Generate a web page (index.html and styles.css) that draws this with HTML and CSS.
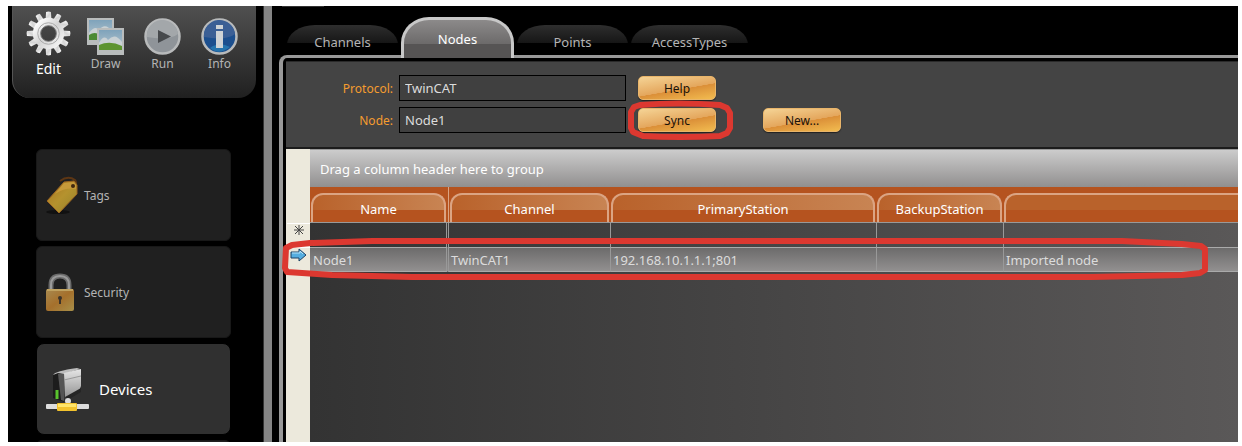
FILE: index.html
```html
<!DOCTYPE html>
<html lang="en">
<head>
    <meta charset="utf-8">
    <meta name="viewport" content="width=device-width, initial-scale=1">
    <link rel="stylesheet" href="styles.css">
    <title>Devices</title>
</head>
<body>

<div class="app">
  <aside class="sidebar">
    <nav class="toolbar">
      <button class="tool tool-active" type="button">
        <svg width="45" height="45" viewBox="0 0 46 46">
          <defs>
            <linearGradient id="gearFill" x1="0" y1="0" x2="1" y2="1">
              <stop offset="0" stop-color="#fff"/>
              <stop offset=".5" stop-color="#d4d4d4"/>
              <stop offset="1" stop-color="#f4f4f4"/>
            </linearGradient>
            <path id="tooth" d="M20 9 L20.5 1 Q23 0 25.5 1 L26 9z"/>
          </defs>
          <g fill="url(#gearFill)">
            <use href="#tooth"/>
            <use href="#tooth" transform="rotate(30 23 23)"/>
            <use href="#tooth" transform="rotate(60 23 23)"/>
            <use href="#tooth" transform="rotate(90 23 23)"/>
            <use href="#tooth" transform="rotate(120 23 23)"/>
            <use href="#tooth" transform="rotate(150 23 23)"/>
            <use href="#tooth" transform="rotate(180 23 23)"/>
            <use href="#tooth" transform="rotate(210 23 23)"/>
            <use href="#tooth" transform="rotate(240 23 23)"/>
            <use href="#tooth" transform="rotate(270 23 23)"/>
            <use href="#tooth" transform="rotate(300 23 23)"/>
            <use href="#tooth" transform="rotate(330 23 23)"/>
          </g>
          <circle cx="23" cy="23" r="12" fill="none" stroke="url(#gearFill)" stroke-width="8"/>
          <circle cx="23" cy="23" r="11" fill="none" stroke="#aaa" stroke-width="1"/>
          <circle cx="23" cy="23" r="8" fill="none" stroke="#777" stroke-width="1"/>
        </svg>
        <span>Edit</span>
      </button>
      <button class="tool" type="button">
        <svg width="37" height="37" viewBox="0 0 37 37">
          <defs>
            <linearGradient id="skyFill" x1="0" y1="0" x2="0" y2="1">
              <stop offset="0" stop-color="#7fa3bb"/>
              <stop offset="1" stop-color="#b6c6ce"/>
            </linearGradient>
          </defs>
          <rect x="0" y="0" width="27" height="27" fill="#b9bcbc"/>
          <rect x="2" y="2" width="23" height="20" fill="url(#skyFill)"/>
          <path d="M2 15 Q8 7 12 12 Q18 4 25 13 V22 H2z" fill="#c9d1d4"/>
          <path d="M2 17 Q8 13 13 17 L13 22 H2z" fill="#4b8a34"/>
          <rect x="10" y="10" width="27" height="27" fill="#b9bcbc"/>
          <rect x="12" y="12" width="23" height="20" fill="url(#skyFill)"/>
          <path d="M12 25 Q17 16 21 22 Q28 14 35 24 V32 H12z" fill="#c9d1d4"/>
          <path d="M12 27 Q23 22 35 28 V32 H12z" fill="#5c9430"/>
        </svg>
        <span>Draw</span>
      </button>
      <button class="tool" type="button">
        <svg width="37" height="37" viewBox="0 0 37 37">
          <circle cx="18.500" cy="18.500" r="17" fill="#8f9499" stroke="#b8babb" stroke-width="2.500"/>
          <path d="M3 19 A15.500 15.500 0 0 1 34 16 Q25 23 3 19z" fill="#a3a7aa"/>
          <path d="M14 12 L27 18.500 L14 25z" fill="#46494c"/>
        </svg>
        <span>Run</span>
      </button>
      <button class="tool" type="button">
        <svg width="37" height="37" viewBox="0 0 37 37">
          <circle cx="18.500" cy="18.500" r="17" fill="#1c4f8e" stroke="#b8babb" stroke-width="2.500"/>
          <path d="M3 19 A15.500 15.500 0 0 1 34 16 Q25 23 3 19z" fill="#3b5f95"/>
          <path d="M9 30 Q18 23 29 29 Q18 38 9 30z" fill="#2674ad"/>
          <rect x="15" y="7" width="7" height="4" fill="#cfd3d6"/>
          <rect x="15" y="13" width="7" height="17" fill="#cfd3d6"/>
        </svg>
        <span>Info</span>
      </button>
    </nav>

    <nav class="menu">
      <a class="card" href="#tags">
        <svg width="32" height="38" viewBox="0 0 32 38">
          <defs>
            <linearGradient id="tagFill" x1="0" y1="0" x2="1" y2="1">
              <stop offset="0" stop-color="#a87420"/>
              <stop offset=".5" stop-color="#b5922e"/>
              <stop offset="1" stop-color="#94842c"/>
            </linearGradient>
          </defs>
          <ellipse cx="12" cy="36" rx="12" ry="2" fill="#111"/>
          <path d="M14 5 Q22 -1 29 4 Q32 8 27 11" fill="none" stroke="#5d3614" stroke-width="2"/>
          <path d="M1 25 L18 6 L28 5 L31 9 V18 L13 37z" fill="url(#tagFill)" stroke="#9a6320" stroke-width="1"/>
          <path d="M18 7 L28 6 L30 9 V13 Q20 11 9 18z" fill="#c79a3a"/>
          <circle cx="27" cy="10" r="2" fill="#40280f"/>
        </svg>
        <span>Tags</span>
      </a>
      <a class="card" href="#security">
        <svg width="32" height="38" viewBox="0 0 32 38">
          <defs>
            <linearGradient id="lockFill" x1="0" y1="0" x2="1" y2="1">
              <stop offset="0" stop-color="#a88a50"/>
              <stop offset=".5" stop-color="#a5702c"/>
              <stop offset="1" stop-color="#a8904a"/>
            </linearGradient>
          </defs>
          <path d="M5 19 V12 Q5 3 14 3 Q23 3 23 12 V19" fill="none" stroke="#6b6b6b" stroke-width="5"/>
          <path d="M5 19 V12 Q5 3 14 3 Q23 3 23 12 V19" fill="none" stroke="#9a9a9a" stroke-width="2"/>
          <rect x="0" y="16" width="28" height="22" rx="2" fill="url(#lockFill)"/>
          <rect x="1" y="16" width="26" height="2" fill="#c0a260"/>
          <circle cx="14" cy="25" r="2" fill="#3b332a"/>
          <rect x="13" y="25" width="2" height="6" fill="#3b332a"/>
        </svg>
        <span>Security</span>
      </a>
      <a class="card card-active" href="#devices">
        <svg width="43" height="44" viewBox="0 0 43 44">
          <defs>
            <linearGradient id="driveFill" x1="0" y1="0" x2="0" y2="1">
              <stop offset="0" stop-color="#e6e6e6"/>
              <stop offset="1" stop-color="#8f8f8f"/>
            </linearGradient>
          </defs>
          <path d="M7 7 L18 6 L18 35 L7 31z" fill="#1c1c1c"/>
          <path d="M7 8 Q9 4 31 1 L34 2 L18 7 L12 6z" fill="#bcbcbc"/>
          <path d="M12 7 L18 7 V34 L15 33z" fill="#555"/>
          <path d="M18 6 L35 2 L35 19 Q34 26 19 32z" fill="url(#driveFill)"/>
          <path d="M18 13 L35 9" stroke="#999" stroke-width="1"/>
          <path d="M19 30 L35 21 V25 L20 34z" fill="#252525"/>
          <path d="M11 23 V32" stroke="#59c32d" stroke-width="3"/>
          <circle cx="22" cy="34" r="3" fill="#ddd"/>
          <rect x="0" y="37" width="43" height="5" rx="1" fill="#ddd"/>
          <rect x="11" y="36" width="20" height="8" rx="1" fill="#f2c22d"/>
          <rect x="12" y="37" width="18" height="3" fill="#ffe56b"/>
        </svg>
        <span>Devices</span>
      </a>
      <div class="card"></div>
    </nav>
  </aside>

  <main class="main">
    <div class="tabs" role="tablist">
      <button class="tab" role="tab" type="button">Channels</button>
      <button class="tab tab-active" role="tab" type="button" aria-selected="true">Nodes</button>
      <button class="tab" role="tab" type="button">Points</button>
      <button class="tab tab-wide" role="tab" type="button">AccessTypes</button>
    </div>

    <div class="panel">
      <form class="form">
        <label for="protocol">Protocol:</label>
        <input id="protocol" type="text" value="TwinCAT">
        <button class="btn" type="button">Help</button>
        <label class="second" for="node">Node:</label>
        <input id="node" type="text" value="Node1">
        <div class="marked">
          <button class="btn" type="button">Sync</button>
          <svg class="mark" width="106" height="40" viewBox="0 0 106 40">
            <path d="M12 5 Q50 2 92 5 L99 8 L102 13 V28 L99 33 L92 36 Q50 38 15 36 L5 32 L3 28 V12 L6 7z"/>
          </svg>
        </div>
        <button class="btn btn-new" type="button">New...</button>
      </form>

      <div class="grid">
        <div class="group-bar">Drag a column header here to group</div>
        <table>
          <colgroup>
            <col class="col-mark">
            <col class="col-name">
            <col class="col-channel">
            <col class="col-primary">
            <col class="col-backup">
            <col>
          </colgroup>
          <thead>
            <tr>
              <td class="gutter"></td>
              <th class="first"><span>Name</span></th>
              <th><span>Channel</span></th>
              <th><span>PrimaryStation</span></th>
              <th><span>BackupStation</span></th>
              <th class="last"><span></span></th>
            </tr>
          </thead>
          <tbody>
            <tr class="new-row">
              <td class="gutter">
                <svg width="12" height="12" viewBox="0 0 12 12" stroke="#444" stroke-width="1">
                  <path d="M6 1V11M1 6H11M2 2L10 10M10 2L2 10"/>
                </svg>
              </td>
              <td></td><td></td><td></td><td></td><td></td>
            </tr>
            <tr class="current">
              <td class="gutter">
                <svg width="18" height="14" viewBox="0 0 18 14">
                  <path d="M1 4 H9 V1 L16 7 L9 13 V10 H1z" fill="#55aee0" stroke="#1d4266" stroke-width="1"/>
                  <path d="M2 5 H10 V3 L13 6" fill="none" stroke="#b4e2f7" stroke-width="1"/>
                </svg>
              </td>
              <td>Node1</td>
              <td>TwinCAT1</td>
              <td>192.168.10.1.1.1;801</td>
              <td></td>
              <td>Imported node</td>
            </tr>
          </tbody>
        </table>
        <svg class="row-mark" width="930" height="44" viewBox="0 0 930 44">
          <path d="M4 10 L10 7 L28 5 L90 3 H840 L900 6 L919 8 L923 11 V32 L918 35 L900 37 L810 39 H130 L50 37 L20 35 L5 34 L3 30z"/>
        </svg>
      </div>
    </div>
  </main>
</div>

</body>
</html>
```

FILE: styles.css
```css
* {
  box-sizing: border-box;
}

body {
  margin: 0;
  padding: 6px 4px 4px 8px;
  background: #fff;
  font-family: "Noto Sans", "Open Sans", sans-serif;
  font-size: 12px;
}

button, input {
  font-family: inherit;
  margin: 0;
}

.app {
  display: flex;
  height: calc(100vh - 10px);
  background: #000;
  overflow: hidden;
}

/* left side */
.sidebar {
  flex: none;
  width: 264px;
  padding-left: 4px;
  border-right: 8px solid #858585;
  box-shadow: inset -1px 0 #333;
}

.toolbar {
  display: flex;
  gap: 12px;
  width: 244px;
  height: 92px;
  padding: 5px 13px 0;
  border-left: 1px solid #555;
  border-radius: 0 0 18px 18px;
  background: linear-gradient(#505050, #202020);
}

.tool {
  display: flex;
  flex: none;
  flex-direction: column;
  align-items: center;
  width: 45px;
  padding: 7px 0 0;
  border: 0;
  background: none;
  color: #b4b4b4;
  font-size: 12px;
  line-height: 18px;
}

.tool-active {
  padding-top: 0;
  color: #fff;
  font-size: 14px;
  line-height: 26px;
}

.menu {
  display: flex;
  flex-direction: column;
  gap: 5px;
  width: 195px;
  margin: 51px 0 0 24px;
}

.card {
  display: flex;
  flex: none;
  align-items: center;
  gap: 6px;
  height: 92px;
  padding-left: 9px;
  border: 1px solid #181818;
  border-radius: 6px;
  background: #202020;
  color: #b4b4b4;
  text-decoration: none;
}

.card-active {
  gap: 10px;
  border-color: #000;
  border-radius: 8px;
  background: #303030;
  color: #fff;
  font-size: 15px;
}

/* tabs */
.main {
  display: flex;
  flex: 1;
  flex-direction: column;
  min-width: 0;
  padding-left: 7px;
  background: linear-gradient(#333, #333) 10px 0 / 42px 1px no-repeat;
}

.tabs {
  display: flex;
  align-items: flex-end;
  gap: 3px;
  height: 52px;
  padding-left: 8px;
  margin-bottom: -3px;
  z-index: 1;
}

.tab {
  width: 111px;
  height: 30px;
  margin-bottom: 3px;
  padding: 4px 0 0;
  border: 0;
  border-radius: 28px 28px 0 0 / 20px 20px 0 0;
  background: linear-gradient(#2e2e2e, #161616 18px, #000 18px);
  color: #b4b4b4;
  font-size: 13px;
}

.tab-wide {
  width: 117px;
}

.tab-active {
  width: 113px;
  height: 41px;
  margin-bottom: 0;
  padding: 0;
  border: 3px solid #c8c8c8;
  border-bottom: 0;
  border-radius: 28px 28px 0 0 / 26px 26px 0 0;
  background: linear-gradient(#8c8a8a, #6c6a6a 24px, #565454 24px);
  color: #fff;
}

.panel {
  display: flex;
  flex: 1;
  flex-direction: column;
  border-top: 3px solid #999;
  border-left: 4px solid #999;
  border-radius: 8px 0 0 0;
  padding: 3px 0 0 3px;
}

/* form */
.form {
  display: grid;
  grid-template-columns: 107px 227px 78px 78px;
  grid-template-rows: 26px 26px;
  align-items: center;
  row-gap: 6px;
  padding: 13px 0 14px;
  border-top: 1px solid #2a2a2a;
  border-bottom: 2px solid #1c1c1c;
  background: #444;
}

.form label {
  color: #f59c2f;
  text-align: right;
}

.form input {
  width: 227px;
  height: 26px;
  margin-left: 6px;
  padding: 0 5px;
  border: 1px solid #000;
  border-radius: 0;
  background: #404040;
  color: #dcdcdc;
  font-size: 13px;
}

.form .second {
  grid-column: 1;
}

.btn {
  width: 78px;
  height: 24px;
  margin-left: 18px;
  padding: 0;
  border: 1px solid #e9b56a;
  border-radius: 5px;
  background: linear-gradient(170deg, #f5d496, #e4a65c 55%, #db8f38 56%, #f2bc50);
  box-shadow: 0 1px 1px #222;
  color: #1a1208;
  font-size: 12px;
}

.btn-new {
  margin-left: 65px;
}

.marked {
  position: relative;
}

.mark, .row-mark {
  position: absolute;
  fill: none;
  stroke: #dc3830;
  stroke-width: 6px;
  stroke-linejoin: round;
  pointer-events: none;
}

.mark {
  left: 8px;
  top: -8px;
}

/* data grid */
.grid {
  position: relative;
  flex: 1;
  padding-left: 1px;
  background: linear-gradient(90deg, #ece9dc 24px, #333 24px, #5a5858);
}

.group-bar {
  height: 38px;
  margin-left: 23px;
  padding-left: 10px;
  border-top: 1px solid #999;
  background: linear-gradient(#ccc, #918f8f);
  color: #fff;
  font-size: 13px;
  line-height: 38px;
}

table {
  width: 100%;
  table-layout: fixed;
  border-collapse: separate;
  border-spacing: 0;
  font-size: 13px;
}

.col-mark { width: 23px; }
.col-name { width: 139px; }
.col-channel { width: 161px; }
.col-primary { width: 266px; }
.col-backup { width: 127px; }

th {
  height: 36px;
  padding: 6px 1px 0;
  border-bottom: 1px solid #999;
  background: #b5531f;
  color: #fff;
  font-weight: normal;
}

th span {
  display: block;
  height: 29px;
  border: 2px solid #dba483;
  border-bottom: 0;
  border-radius: 12px 12px 0 0;
  background: linear-gradient(#b5531f, #b5531f) 0 15px no-repeat, linear-gradient(90deg, #b9622b, #c88453);
  line-height: 28px;
}

th.first {
  padding-right: 2px;
  border-right: 1px solid #dba483;
}

th.last {
  padding-right: 0;
}

th.last span {
  border-right: 0;
  border-radius: 12px 0 0 0;
  background: linear-gradient(#b5531f, #b5531f) 0 15px no-repeat, #b9622b;
}

tbody td {
  height: 24px;
  padding: 0 0 0 2px;
  border-left: 1px solid #999;
  color: #dcdcdc;
  white-space: nowrap;
}

tbody td:nth-child(2) {
  padding-left: 3px;
  border-left: 0;
  border-right: 3px double #999;
}

tbody td:nth-child(3) {
  border-left: 0;
}

.current td {
  height: 25px;
  border-top: 1px solid #aaa;
  border-bottom: 1px solid #aaa;
  background: linear-gradient(#6c6b6b, #929090);
}

tbody .gutter, .current .gutter {
  padding: 0;
  border: 0;
  border-top: 1px solid #fff;
  background: none;
  vertical-align: top;
}

.gutter svg {
  display: block;
  margin: 0 auto;
}

.row-mark {
  left: -4px;
  top: 89px;
}
```
